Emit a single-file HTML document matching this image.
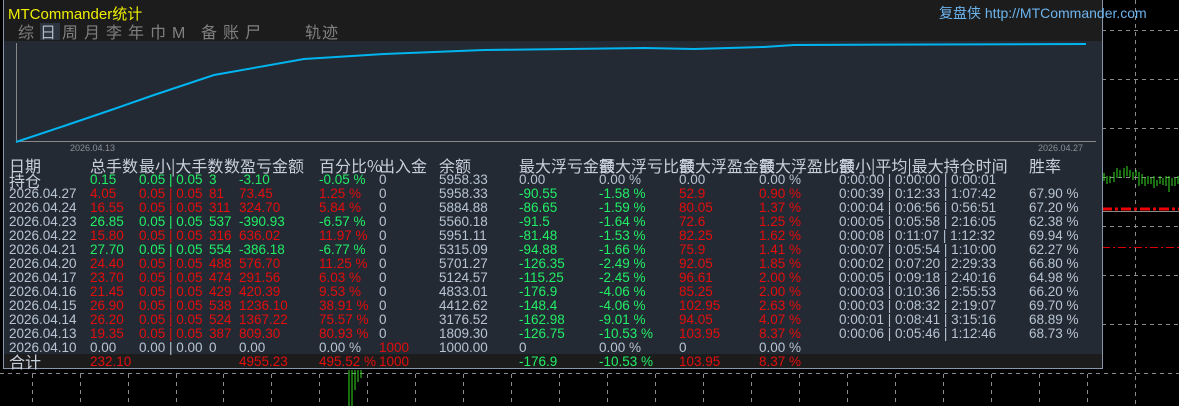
<!DOCTYPE html>
<html><head><meta charset="utf-8"><style>
body{margin:0;width:1179px;height:406px;background:#000;overflow:hidden;position:relative;font-family:"Liberation Sans","Noto Sans CJK SC",sans-serif}
.a{position:absolute;white-space:nowrap}
#panel{position:absolute;left:3px;top:0;width:1098px;height:368px;background:#232a33;border:1px solid #8796aa;border-top:none}
#top{position:absolute;left:0;top:0;width:1098px;height:41px;background:#1c1c1c}
#sum{position:absolute;left:0;top:354px;width:1098px;height:14px;background:#1c1c1c}
.t{font-size:13.5px;line-height:14px;color:#c8d0dc}
.h{font-size:16px;line-height:16px;color:#c8d0dc;font-family:"Noto Sans CJK SC",sans-serif}
.g{color:#22ee66}.r{color:#e30d0d}.w{color:#b8c4d4}
</style></head><body>
<svg class="a" style="left:0;top:0" width="1179" height="406">
<g stroke="#8a8a8a" stroke-dasharray="4,4" stroke-width="1">
<line x1="1102" y1="30.5" x2="1179" y2="30.5"/><line x1="1102" y1="79.5" x2="1179" y2="79.5"/><line x1="1102" y1="128.5" x2="1179" y2="128.5"/><line x1="1102" y1="177.5" x2="1179" y2="177.5"/><line x1="1102" y1="226.5" x2="1179" y2="226.5"/><line x1="1102" y1="275.5" x2="1179" y2="275.5"/><line x1="1102" y1="324.5" x2="1179" y2="324.5"/><line x1="0" y1="373.5" x2="1179" y2="373.5"/>
<line x1="1135.5" y1="0" x2="1135.5" y2="406"/>
<line x1="32.5" y1="374" x2="32.5" y2="406"/><line x1="80.5" y1="374" x2="80.5" y2="406"/><line x1="128.5" y1="374" x2="128.5" y2="406"/><line x1="176.5" y1="374" x2="176.5" y2="406"/><line x1="223.5" y1="374" x2="223.5" y2="406"/><line x1="271.5" y1="374" x2="271.5" y2="406"/><line x1="319.5" y1="374" x2="319.5" y2="406"/><line x1="367.5" y1="374" x2="367.5" y2="406"/><line x1="415.5" y1="374" x2="415.5" y2="406"/><line x1="463.5" y1="374" x2="463.5" y2="406"/><line x1="511.5" y1="374" x2="511.5" y2="406"/><line x1="559.5" y1="374" x2="559.5" y2="406"/><line x1="607.5" y1="374" x2="607.5" y2="406"/><line x1="655.5" y1="374" x2="655.5" y2="406"/><line x1="703.5" y1="374" x2="703.5" y2="406"/><line x1="751.5" y1="374" x2="751.5" y2="406"/><line x1="799.5" y1="374" x2="799.5" y2="406"/><line x1="847.5" y1="374" x2="847.5" y2="406"/><line x1="895.5" y1="374" x2="895.5" y2="406"/><line x1="943.5" y1="374" x2="943.5" y2="406"/><line x1="991.5" y1="374" x2="991.5" y2="406"/><line x1="1039.5" y1="374" x2="1039.5" y2="406"/><line x1="1087.5" y1="374" x2="1087.5" y2="406"/>
</g>
<line x1="1102" y1="209" x2="1179" y2="209" stroke="#e00" stroke-width="3" stroke-dasharray="10,3,3,3"/>
<line x1="1102" y1="211.5" x2="1179" y2="211.5" stroke="#888"/>
<line x1="1102" y1="247.5" x2="1179" y2="247.5" stroke="#d00" stroke-dasharray="8,3,2,3"/>
<path d="M1104 173v8M1107 176v8M1110 176v7M1114 172v10M1117 168v10M1120 170v8M1124 168v10M1127 166v10M1130 170v7M1133 172v8M1136 170v6M1139 172v14M1142 174v10M1145 178v8M1148 176v8M1151 178v6M1154 176v12M1157 180v6M1160 176v8M1163 178v7M1166 176v10M1169 176v16M1172 178v8M1175 178v8M1178 176v8" stroke="#33dd22" stroke-width="1"/>
<path d="M349 370v36M352 370v36M355 370v20M358 370v12M361 370v8" stroke="#33dd22"/>
<path d="M1101 37l-5 4l5 4z" fill="#ccc"/>
</svg>
<div id="panel">
<div id="top"></div>
<div id="sum"></div>
<div class="a" style="left:4px;top:3px;font-size:15px;color:#f0f000">MTCommander<span style="font-family:'Noto Sans CJK SC'">统计</span></div>
<div class="a" style="left:935px;top:3px;font-size:14px;color:#6cb4ee"><span style="font-family:'Noto Sans CJK SC'">复盘侠</span> http://MTCommander.com</div>
<div class="a" style="left:36px;top:23px;width:20px;height:17px;background:#2c3440"></div>
<div class="a h" style="left:14px;top:23px;color:#808080;letter-spacing:6px">综<span style="color:#b0b8c4">日</span>周月李年巾<span style="font-family:'Liberation Sans'">M</span> 备账尸</div>
<div class="a h" style="left:301px;top:23px;color:#808080;letter-spacing:1px">轨迹</div>
<svg class="a" style="left:0;top:41px" width="1098" height="120">
<line x1="12.5" y1="2" x2="12.5" y2="101" stroke="#888"/>
<line x1="12" y1="100.5" x2="1092" y2="100.5" stroke="#888"/>
<polyline fill="none" stroke="#00b4f0" stroke-width="2" points="12,101 60,85 110,68 150,54 195,39 210,34 300,18 380,13 480,9 640,7 690,8 760,6 790,4 1082,3"/>
<text x="66" y="110" font-size="9" fill="#8a8f96" font-family="Liberation Sans">2026.04.13</text>
<text x="1034" y="110" font-size="9" fill="#8a8f96" font-family="Liberation Sans">2026.04.27</text>
</svg>
<div class="a h" style="left:5px;top:157px">日期</div>
<div class="a h" style="left:86px;top:157px">总手数</div>
<div class="a h" style="left:135px;top:157px">最小|大手数</div>
<div class="a h" style="left:220px;top:157px">数盈亏金额</div>
<div class="a h" style="left:315px;top:157px">百分比%</div>
<div class="a h" style="left:375px;top:157px">出入金</div>
<div class="a h" style="left:435px;top:157px">余额</div>
<div class="a h" style="left:515px;top:157px">最大浮亏金额</div>
<div class="a h" style="left:595px;top:157px">最大浮亏比额</div>
<div class="a h" style="left:675px;top:157px">最大浮盈金额</div>
<div class="a h" style="left:755px;top:157px">最大浮盈比额</div>
<div class="a h" style="left:835px;top:157px">最小|平均|最大持仓时间</div>
<div class="a h" style="left:1025px;top:157px">胜率</div>
<div class="a h" style="left:5px;top:172px">持仓</div>
<div class="a h" style="left:5px;top:353px">合计</div>
<div id="rows"></div>
</div>
<script>
var R=[
["",'g','0.15','g','0.05 | 0.05','3','-3.10','-0.05 %','0','5958.33','w','0.00','w','0.00 %','w','0.00','0.00 %','0:00:00 | 0:00:00 | 0:00:01',''],
["2026.04.27",'r','4.05','r','0.05 | 0.05','81','73.45','1.25 %','0','5958.33','g','-90.55','g','-1.58 %','r','52.9','0.90 %','0:00:39 | 0:12:33 | 1:07:42','67.90 %'],
["2026.04.24",'r','16.55','r','0.05 | 0.05','311','324.70','5.84 %','0','5884.88','g','-86.65','g','-1.59 %','r','80.05','1.37 %','0:00:04 | 0:06:56 | 0:56:51','67.20 %'],
["2026.04.23",'g','26.85','g','0.05 | 0.05','537','-390.93','-6.57 %','0','5560.18','g','-91.5','g','-1.64 %','r','72.6','1.25 %','0:00:05 | 0:05:58 | 2:16:05','62.38 %'],
["2026.04.22",'r','15.80','r','0.05 | 0.05','316','636.02','11.97 %','0','5951.11','g','-81.48','g','-1.53 %','r','82.25','1.62 %','0:00:08 | 0:11:07 | 1:12:32','69.94 %'],
["2026.04.21",'g','27.70','g','0.05 | 0.05','554','-386.18','-6.77 %','0','5315.09','g','-94.88','g','-1.66 %','r','75.9','1.41 %','0:00:07 | 0:05:54 | 1:10:00','62.27 %'],
["2026.04.20",'r','24.40','r','0.05 | 0.05','488','576.70','11.25 %','0','5701.27','g','-126.35','g','-2.49 %','r','92.05','1.85 %','0:00:02 | 0:07:20 | 2:29:33','66.80 %'],
["2026.04.17",'r','23.70','r','0.05 | 0.05','474','291.56','6.03 %','0','5124.57','g','-115.25','g','-2.45 %','r','96.61','2.00 %','0:00:05 | 0:09:18 | 2:40:16','64.98 %'],
["2026.04.16",'r','21.45','r','0.05 | 0.05','429','420.39','9.53 %','0','4833.01','g','-176.9','g','-4.06 %','r','85.25','2.00 %','0:00:03 | 0:10:36 | 2:55:53','66.20 %'],
["2026.04.15",'r','26.90','r','0.05 | 0.05','538','1236.10','38.91 %','0','4412.62','g','-148.4','g','-4.06 %','r','102.95','2.63 %','0:00:03 | 0:08:32 | 2:19:07','69.70 %'],
["2026.04.14",'r','26.20','r','0.05 | 0.05','524','1367.22','75.57 %','0','3176.52','g','-162.98','g','-9.01 %','r','94.05','4.07 %','0:00:01 | 0:08:41 | 3:15:16','68.89 %'],
["2026.04.13",'r','19.35','r','0.05 | 0.05','387','809.30','80.93 %','0','1809.30','g','-126.75','g','-10.53 %','r','103.95','8.37 %','0:00:06 | 0:05:46 | 1:12:46','68.73 %'],
["2026.04.10",'w','0.00','w','0.00 | 0.00','0','0.00','0.00 %','r1000','1000.00','w','0','w','0.00 %','w','0','0.00 %','','']];
var h='';
function s(x,y,c,t){if(t==='')return;if(t[0]=='r'&&t.length>1&&t[1]!='.'){c='r';t=t.slice(1);}h+='<div class="a t '+c+'" style="left:'+x+'px;top:'+y+'px">'+t+'</div>';}
R.forEach(function(r,i){var y=173+i*14;
s(5,y,'w',r[0]);s(86,y,r[1],r[2]);s(135,y,r[3],r[4]);s(205,y,r[3],r[5]);s(235,y,r[3],r[6]);s(315,y,r[3],r[7]);s(375,y,'w',r[8]);s(435,y,'w',r[9]);s(515,y,r[10],r[11]);s(595,y,r[12],r[13]);s(675,y,r[14],r[15]);s(755,y,r[14],r[16]);s(835,y,'w',r[17]);s(1025,y,'w',r[18]);});
var y=355;s(86,y,'r','232.10');s(235,y,'r','4955.23');s(315,y,'r','495.52 %');s(375,y,'r','1000');s(515,y,'g','-176.9');s(595,y,'g','-10.53 %');s(675,y,'r','103.95');s(755,y,'r','8.37 %');
document.getElementById('rows').innerHTML=h;
</script>
</body></html>
